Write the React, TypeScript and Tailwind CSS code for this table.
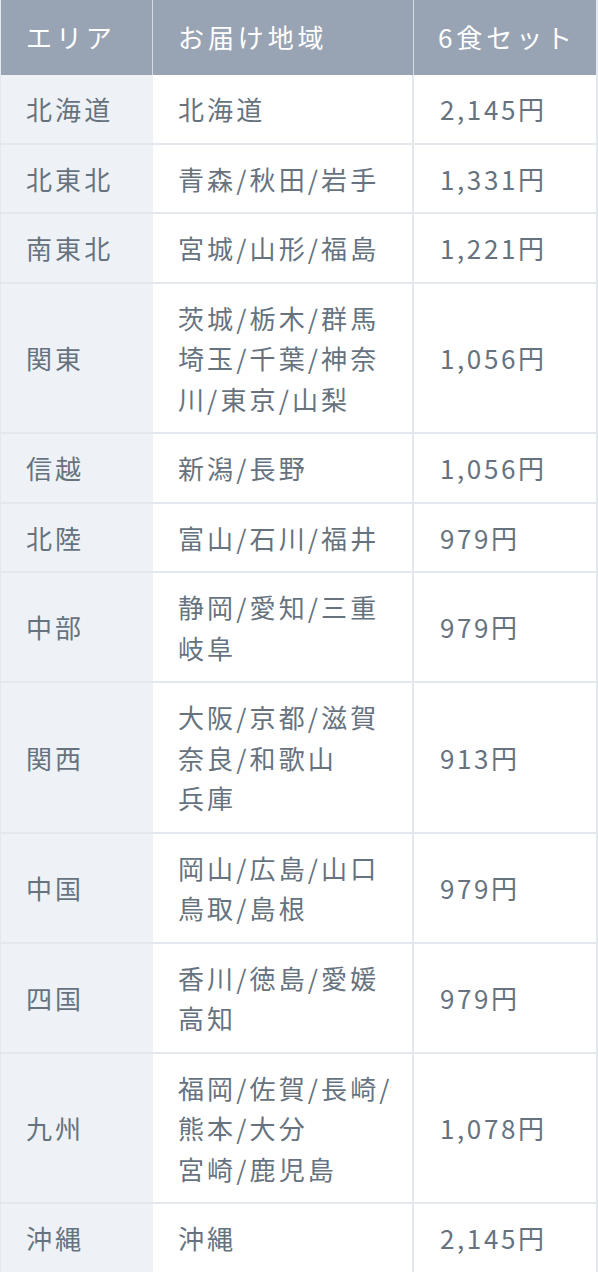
const rows = [
  { area: "北海道", regions: ["北海道"], price: "2,145円" },
  { area: "北東北", regions: ["青森/秋田/岩手"], price: "1,331円" },
  { area: "南東北", regions: ["宮城/山形/福島"], price: "1,221円" },
  { area: "関東", regions: ["茨城/栃木/群馬", "埼玉/千葉/神奈", "川/東京/山梨"], price: "1,056円" },
  { area: "信越", regions: ["新潟/長野"], price: "1,056円" },
  { area: "北陸", regions: ["富山/石川/福井"], price: "979円" },
  { area: "中部", regions: ["静岡/愛知/三重", "岐阜"], price: "979円" },
  { area: "関西", regions: ["大阪/京都/滋賀", "奈良/和歌山", "兵庫"], price: "913円" },
  { area: "中国", regions: ["岡山/広島/山口", "鳥取/島根"], price: "979円" },
  { area: "四国", regions: ["香川/徳島/愛媛", "高知"], price: "979円" },
  { area: "九州", regions: ["福岡/佐賀/長崎/", "熊本/大分", "宮崎/鹿児島"], price: "1,078円" },
  { area: "沖縄", regions: ["沖縄"], price: "2,145円" },
];

export default function App() {
  return (
    <div
      className="w-[598px] bg-white text-[26px] leading-[40.5px] text-[#66737f]"
      style={{ fontFamily: '"Noto Sans CJK JP", "Noto Sans", sans-serif' }}
    >
      <div className="border-l border-r-2 border-[#e3e8ee]">
        {/* Header */}
        <div className="grid h-[75px] grid-cols-[152px_261px_1fr] bg-[#98a4b3] text-white tracking-[0.15em]">
          <div className="flex items-center border-r border-white/60 pl-[25px]">エリア</div>
          <div className="flex items-center border-r border-white/60 pl-[25px]">お届け地域</div>
          <div className="flex items-center pl-[24px]">6食セット</div>
        </div>

        {rows.map((r) => (
          <div
            key={r.area}
            className="grid grid-cols-[152px_261px_1fr] border-b-2 border-[#e3e8ee] tracking-[0.12em]"
          >
            <div className="flex items-center bg-[#eef2f6] pl-[25px] pt-[14px] pb-[13px]">{r.area}</div>
            <div className="border-r-2 border-[#e3e8ee] pl-[25px] pt-[14px] pb-[13px]">
              {r.regions.map((line) => (
                <div key={line} className="whitespace-nowrap">
                  {line}
                </div>
              ))}
            </div>
            <div className="flex items-center pl-[26px] pt-[14px] pb-[13px] tracking-[0.1em]">{r.price}</div>
          </div>
        ))}
      </div>
    </div>
  );
}
